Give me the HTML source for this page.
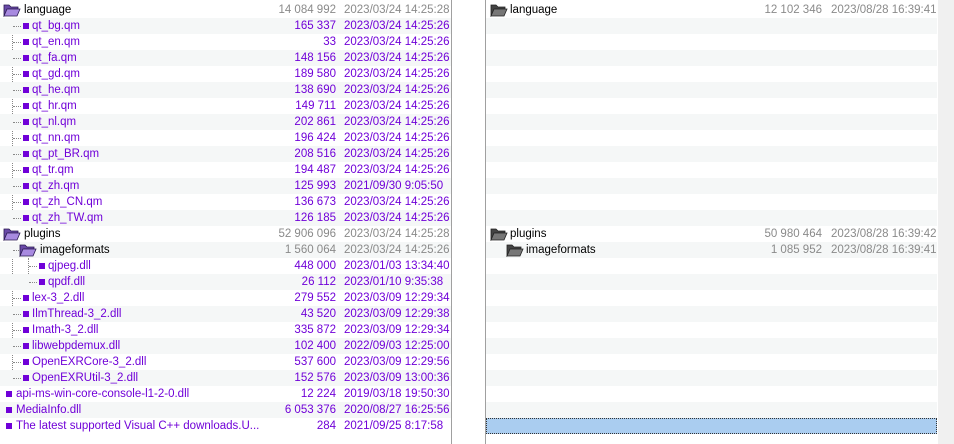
<!DOCTYPE html><html><head><meta charset="utf-8"><style>
*{margin:0;padding:0;box-sizing:border-box}
body{width:954px;height:444px;background:#fff;font-family:"Liberation Sans",sans-serif;font-size:11.5px;position:relative;overflow:hidden;color:#000}
.r{position:absolute;height:16px;line-height:17px;white-space:nowrap}
.L{left:0;width:451px}.R{left:486px;width:451px}
.s{background:#f5f7f7}
.n{position:absolute;top:0}
.z{position:absolute;top:0;text-align:right}
.d{position:absolute;top:0}
.L .z{right:115px}.L .d{left:344px}
.R .z{right:115px}.R .d{left:345px}
.p{color:#7000d8}.g{color:#8a8a8a}
.sq{position:absolute;top:5px;width:6px;height:6px;background:#7000d8}
.vl{position:absolute;border-left:1px dotted #888;width:0}
.hl{position:absolute;border-top:1px dotted #888;height:0;top:8px}
.fo{position:absolute;top:1px}
</style></head><body>
<div style="position:absolute;left:451px;top:0;width:1px;height:444px;background:#a0a0a0"></div>
<div style="position:absolute;left:485px;top:0;width:1px;height:444px;background:#a0a0a0"></div>
<div style="position:absolute;left:938px;top:0;width:16px;height:444px;background:#f0f0f0"></div>
<svg width="0" height="0" style="position:absolute"><defs>
<symbol id="fp" viewBox="0 0 18 14"><path d="M1 2h5l2 2h7v2H5L1 13z" fill="#6a4aa8" stroke="#2a1a50" stroke-width=".8"/><path d="M1 13l3-7h13l-3 7z" fill="#a88ae0" stroke="#2a1a50" stroke-width=".8"/></symbol>
<symbol id="fg" viewBox="0 0 18 14"><path d="M1 2h5l2 2h7v2H5L1 13z" fill="#444" stroke="#222" stroke-width=".8"/><path d="M1 13l3-7h13l-3 7z" fill="#777" stroke="#222" stroke-width=".8"/></symbol>
</defs></svg>
<div class="vl" style="left:12px;top:18px;height:200px"></div>
<div class="vl" style="left:12px;top:242px;height:136px"></div>
<div class="vl" style="left:28px;top:258px;height:24px"></div>
<div class="vl" style="left:497px;top:242px;height:8px"></div>
<div class="hl" style="left:497px;top:250px;width:8px"></div>

<div class="r L" style="top:2px"><svg class="fo" style="left:3px" width="18" height="14"><use href="#fp"/></svg><span class="n" style="left:24px">language</span><span class="z g">14 084 992</span><span class="d g">2023/03/24 14:25:28</span></div>
<div class="r L s p" style="top:18px"><span class="hl" style="left:13px;width:8px"></span><span class="sq" style="left:23px"></span><span class="n" style="left:32px">qt_bg.qm</span><span class="z">165 337</span><span class="d">2023/03/24 14:25:26</span></div>
<div class="r L p" style="top:34px"><span class="hl" style="left:13px;width:8px"></span><span class="sq" style="left:23px"></span><span class="n" style="left:32px">qt_en.qm</span><span class="z">33</span><span class="d">2023/03/24 14:25:26</span></div>
<div class="r L s p" style="top:50px"><span class="hl" style="left:13px;width:8px"></span><span class="sq" style="left:23px"></span><span class="n" style="left:32px">qt_fa.qm</span><span class="z">148 156</span><span class="d">2023/03/24 14:25:26</span></div>
<div class="r L p" style="top:66px"><span class="hl" style="left:13px;width:8px"></span><span class="sq" style="left:23px"></span><span class="n" style="left:32px">qt_gd.qm</span><span class="z">189 580</span><span class="d">2023/03/24 14:25:26</span></div>
<div class="r L s p" style="top:82px"><span class="hl" style="left:13px;width:8px"></span><span class="sq" style="left:23px"></span><span class="n" style="left:32px">qt_he.qm</span><span class="z">138 690</span><span class="d">2023/03/24 14:25:26</span></div>
<div class="r L p" style="top:98px"><span class="hl" style="left:13px;width:8px"></span><span class="sq" style="left:23px"></span><span class="n" style="left:32px">qt_hr.qm</span><span class="z">149 711</span><span class="d">2023/03/24 14:25:26</span></div>
<div class="r L s p" style="top:114px"><span class="hl" style="left:13px;width:8px"></span><span class="sq" style="left:23px"></span><span class="n" style="left:32px">qt_nl.qm</span><span class="z">202 861</span><span class="d">2023/03/24 14:25:26</span></div>
<div class="r L p" style="top:130px"><span class="hl" style="left:13px;width:8px"></span><span class="sq" style="left:23px"></span><span class="n" style="left:32px">qt_nn.qm</span><span class="z">196 424</span><span class="d">2023/03/24 14:25:26</span></div>
<div class="r L s p" style="top:146px"><span class="hl" style="left:13px;width:8px"></span><span class="sq" style="left:23px"></span><span class="n" style="left:32px">qt_pt_BR.qm</span><span class="z">208 516</span><span class="d">2023/03/24 14:25:26</span></div>
<div class="r L p" style="top:162px"><span class="hl" style="left:13px;width:8px"></span><span class="sq" style="left:23px"></span><span class="n" style="left:32px">qt_tr.qm</span><span class="z">194 487</span><span class="d">2023/03/24 14:25:26</span></div>
<div class="r L s p" style="top:178px"><span class="hl" style="left:13px;width:8px"></span><span class="sq" style="left:23px"></span><span class="n" style="left:32px">qt_zh.qm</span><span class="z">125 993</span><span class="d">2021/09/30 9:05:50</span></div>
<div class="r L p" style="top:194px"><span class="hl" style="left:13px;width:8px"></span><span class="sq" style="left:23px"></span><span class="n" style="left:32px">qt_zh_CN.qm</span><span class="z">136 673</span><span class="d">2023/03/24 14:25:26</span></div>
<div class="r L s p" style="top:210px"><span class="hl" style="left:13px;width:8px"></span><span class="sq" style="left:23px"></span><span class="n" style="left:32px">qt_zh_TW.qm</span><span class="z">126 185</span><span class="d">2023/03/24 14:25:26</span></div>
<div class="r L" style="top:226px"><svg class="fo" style="left:3px" width="18" height="14"><use href="#fp"/></svg><span class="n" style="left:24px">plugins</span><span class="z g">52 906 096</span><span class="d g">2023/03/24 14:25:28</span></div>
<div class="r L s" style="top:242px"><span class="hl" style="left:13px;width:8px"></span><svg class="fo" style="left:19px" width="18" height="14"><use href="#fp"/></svg><span class="n" style="left:40px">imageformats</span><span class="z g">1 560 064</span><span class="d g">2023/03/24 14:25:26</span></div>
<div class="r L p" style="top:258px"><span class="hl" style="left:29px;width:8px"></span><span class="sq" style="left:39px"></span><span class="n" style="left:48px">qjpeg.dll</span><span class="z">448 000</span><span class="d">2023/01/03 13:34:40</span></div>
<div class="r L s p" style="top:274px"><span class="hl" style="left:29px;width:8px"></span><span class="sq" style="left:39px"></span><span class="n" style="left:48px">qpdf.dll</span><span class="z">26 112</span><span class="d">2023/01/10 9:35:38</span></div>
<div class="r L p" style="top:290px"><span class="hl" style="left:13px;width:8px"></span><span class="sq" style="left:23px"></span><span class="n" style="left:32px">lex-3_2.dll</span><span class="z">279 552</span><span class="d">2023/03/09 12:29:34</span></div>
<div class="r L s p" style="top:306px"><span class="hl" style="left:13px;width:8px"></span><span class="sq" style="left:23px"></span><span class="n" style="left:32px">IlmThread-3_2.dll</span><span class="z">43 520</span><span class="d">2023/03/09 12:29:38</span></div>
<div class="r L p" style="top:322px"><span class="hl" style="left:13px;width:8px"></span><span class="sq" style="left:23px"></span><span class="n" style="left:32px">Imath-3_2.dll</span><span class="z">335 872</span><span class="d">2023/03/09 12:29:34</span></div>
<div class="r L s p" style="top:338px"><span class="hl" style="left:13px;width:8px"></span><span class="sq" style="left:23px"></span><span class="n" style="left:32px">libwebpdemux.dll</span><span class="z">102 400</span><span class="d">2022/09/03 12:25:00</span></div>
<div class="r L p" style="top:354px"><span class="hl" style="left:13px;width:8px"></span><span class="sq" style="left:23px"></span><span class="n" style="left:32px">OpenEXRCore-3_2.dll</span><span class="z">537 600</span><span class="d">2023/03/09 12:29:56</span></div>
<div class="r L s p" style="top:370px"><span class="hl" style="left:13px;width:8px"></span><span class="sq" style="left:23px"></span><span class="n" style="left:32px">OpenEXRUtil-3_2.dll</span><span class="z">152 576</span><span class="d">2023/03/09 13:00:36</span></div>
<div class="r L p" style="top:386px"><span class="sq" style="left:6px"></span><span class="n" style="left:16px">api-ms-win-core-console-l1-2-0.dll</span><span class="z">12 224</span><span class="d">2019/03/18 19:50:30</span></div>
<div class="r L s p" style="top:402px"><span class="sq" style="left:6px"></span><span class="n" style="left:16px">MediaInfo.dll</span><span class="z">6 053 376</span><span class="d">2020/08/27 16:25:56</span></div>
<div class="r L p" style="top:418px"><span class="sq" style="left:6px"></span><span class="n" style="left:16px">The latest supported Visual C++ downloads.U...</span><span class="z">284</span><span class="d">2021/09/25 8:17:58</span></div>

<div class="r R" style="top:2px"><svg class="fo" style="left:4px" width="18" height="14"><use href="#fg"/></svg><span class="n" style="left:24px">language</span><span class="z g">12 102 346</span><span class="d g">2023/08/28 16:39:41</span></div>
<div class="r R s" style="top:18px"></div><div class="r R s" style="top:50px"></div><div class="r R s" style="top:82px"></div><div class="r R s" style="top:114px"></div><div class="r R s" style="top:146px"></div><div class="r R s" style="top:178px"></div><div class="r R s" style="top:210px"></div>
<div class="r R" style="top:226px"><svg class="fo" style="left:4px" width="18" height="14"><use href="#fg"/></svg><span class="n" style="left:24px">plugins</span><span class="z g">50 980 464</span><span class="d g">2023/08/28 16:39:42</span></div>
<div class="r R s" style="top:242px"><svg class="fo" style="left:20px" width="18" height="14"><use href="#fg"/></svg><span class="n" style="left:40px">imageformats</span><span class="z g">1 085 952</span><span class="d g">2023/08/28 16:39:41</span></div>
<div class="r R s" style="top:274px"></div><div class="r R s" style="top:306px"></div><div class="r R s" style="top:338px"></div><div class="r R s" style="top:370px"></div><div class="r R s" style="top:402px"></div>
<div class="r R" style="top:418px;background:#aacdf0;border:1px dotted #333"></div>
</body></html>
